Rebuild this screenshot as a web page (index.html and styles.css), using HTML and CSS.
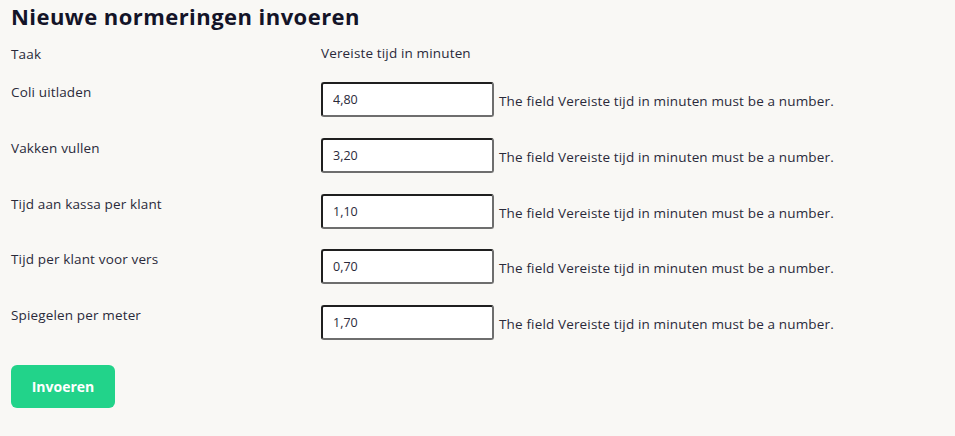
FILE: index.html
```html
<!DOCTYPE html>
<html lang="nl">
<head>
<meta charset="utf-8">
<title>Nieuwe normeringen invoeren</title>
<link rel="stylesheet" href="styles.css">
</head>
<body>
<main class="page">
  <h1 class="title">Nieuwe normeringen invoeren</h1>
  <form class="form">
    <div class="row head">
      <div class="label">Taak</div>
      <div class="value">Vereiste tijd in minuten</div>
    </div>
    <div class="row">
      <div class="label">Coli uitladen</div>
      <div class="value"><input class="field" type="text" value="4,80"><span class="error">The field Vereiste tijd in minuten must be a number.</span></div>
    </div>
    <div class="row">
      <div class="label">Vakken vullen</div>
      <div class="value"><input class="field" type="text" value="3,20"><span class="error">The field Vereiste tijd in minuten must be a number.</span></div>
    </div>
    <div class="row">
      <div class="label">Tijd aan kassa per klant</div>
      <div class="value"><input class="field" type="text" value="1,10"><span class="error">The field Vereiste tijd in minuten must be a number.</span></div>
    </div>
    <div class="row">
      <div class="label">Tijd per klant voor vers</div>
      <div class="value"><input class="field" type="text" value="0,70"><span class="error">The field Vereiste tijd in minuten must be a number.</span></div>
    </div>
    <div class="row">
      <div class="label">Spiegelen per meter</div>
      <div class="value"><input class="field" type="text" value="1,70"><span class="error">The field Vereiste tijd in minuten must be a number.</span></div>
    </div>
    <button class="submit" type="button">Invoeren</button>
  </form>
</main>
</body>
</html>
```
FILE: styles.css
```css
html, body {
  margin: 0;
  padding: 0;
  background: #f9f8f5;
}
body {
  font-family: "Open Sans", "Noto Sans", sans-serif;
  color: #2a2a3a;
}
.page {
  padding: 0 11px;
}
.title {
  margin: 0;
  padding-top: 1px;
  font-size: 22px;
  font-weight: 700;
  color: #141428;
  line-height: 30px;
  letter-spacing: 0.45px;
}
.form {
  display: flex;
  flex-direction: column;
  margin-top: 13px;
}
.row {
  display: grid;
  grid-template-columns: 310px 1fr;
  align-items: start;
  height: 55.75px;
  font-size: 13.5px;
  letter-spacing: 0.15px;
}
.row.head {
  height: 40px;
  line-height: 18px;
}
.row .label {
  padding-top: 1px;
  line-height: 18px;
}
.row:not(.head) .label {
  padding-top: 0;
  line-height: 16px;
}
.value {
  display: flex;
  align-items: center;
  gap: 5px;
  white-space: nowrap;
}
.row:not(.head) .value {
  margin-top: -2px;
}
.field {
  box-sizing: border-box;
  width: 173px;
  height: 35px;
  padding: 0 10px;
  border: 2px solid;
  border-color: #1f1f1f #6e6e6e #6e6e6e #1f1f1f;
  border-radius: 3px;
  background: #fff;
  font-family: inherit;
  font-size: 12.5px;
  color: #2a2a3a;
  margin: 0;
}
.error {
  padding-top: 3px;
}
.submit {
  align-self: flex-start;
  margin-top: 2px;
  width: 104px;
  height: 43px;
  border: none;
  border-radius: 6px;
  background: #22d38a;
  color: #fff;
  font-family: inherit;
  font-size: 14px;
  font-weight: 700;
}
```
